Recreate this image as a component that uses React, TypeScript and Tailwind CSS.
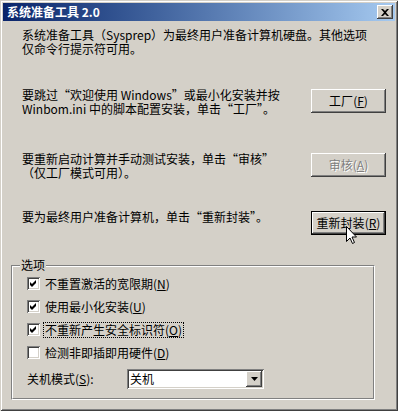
const raised =
  "shadow-[inset_-1px_-1px_#404040,inset_1px_1px_#ffffff,inset_-2px_-2px_#808080,inset_2px_2px_#d4d0c8]";

function Btn({ label, hot, disabled, isDefault }: { label: string; hot: string; disabled?: boolean; isDefault?: boolean }) {
  return (
    <div
      className={`w-[75px] h-[24px] shrink-0 flex items-center justify-center bg-[#d4d0c8] text-[12px] leading-[14px] ${
        isDefault
          ? "shadow-[inset_0_0_0_1px_#000000,inset_-2px_-2px_#404040,inset_2px_2px_#ffffff,inset_-3px_-3px_#808080]"
          : raised
      } ${disabled ? "text-[#808080] [text-shadow:1px_1px_0_#ffffff]" : "text-black"}`}
    >
      {label}(<span className="underline">{hot}</span>)
    </div>
  );
}

function Check({ checked }: { checked: boolean }) {
  return (
    <div className="w-[13px] h-[13px] shrink-0 bg-white shadow-[inset_1px_1px_#808080,inset_-1px_-1px_#ffffff,inset_2px_2px_#404040,inset_-2px_-2px_#d4d0c8]">
      {checked && (
        <svg width="13" height="13" viewBox="0 0 13 13">
          <polygon points="3,5 5,7 9,3 9,6 5,10 3,8" fill="#000" />
        </svg>
      )}
    </div>
  );
}

const options = [
  { text: "不重置激活的宽限期", hot: "N", checked: true },
  { text: "使用最小化安装", hot: "U", checked: true },
  { text: "不重新产生安全标识符", hot: "O", checked: true, focus: true },
  { text: "检测非即插即用硬件", hot: "D", checked: false },
];

export default function App() {
  return (
    <div className="relative w-[398px] h-[411px] overflow-hidden bg-[#d4d0c8] p-[3px] font-['Noto_Sans_CJK_SC',sans-serif] text-[12px] leading-[14px] text-black shadow-[inset_1px_1px_#d4d0c8,inset_-1px_-1px_#404040,inset_2px_2px_#ffffff,inset_-2px_-2px_#808080]">
      {/* Title bar */}
      <div className="h-[18px] flex items-center justify-between pl-[4px] pr-[2px] bg-linear-to-r from-[#0a246a] to-[#a6caf0]">
        <span className="text-white font-bold text-[12px]">系统准备工具 2.0</span>
        <div className={`w-[16px] h-[14px] flex items-center justify-center bg-[#d4d0c8] ${raised}`}>
          <svg width="8" height="7" viewBox="0 0 8 7">
            <path d="M0 0h2l2 2 2-2h2L5 3.5 8 7H6L4 5 2 7H0l3-3.5z" fill="#000" />
          </svg>
        </div>
      </div>

      <div className="-mx-[3px]">
        <p className="mt-[7px] pl-[22px]">
          系统准备工具（Sysprep）为最终用户准备计算机硬盘。其他选项
          <br />
          仅命令行提示符可用。
        </p>

        <div className="mt-[32px] pl-[22px] pr-[12px] flex justify-between items-start">
          <p>
            要跳过“欢迎使用 Windows”或最小化安装并按
            <br />
            Winbom.ini 中的脚本配置安装，单击“工厂”。
          </p>
          <div className="mt-[1px]">
            <Btn label="工厂" hot="F" />
          </div>
        </div>

        <div className="mt-[36px] pl-[22px] pr-[12px] flex justify-between items-start">
          <p>
            要重新启动计算并手动测试安装，单击“审核”
            <br />
            （仅工厂模式可用）。
          </p>
          <div className="mt-[1px]">
            <Btn label="审核" hot="A" disabled />
          </div>
        </div>

        <div className="mt-[30px] pl-[22px] pr-[12px] flex justify-between items-start">
          <p>要为最终用户准备计算机，单击“重新封装”。</p>
          <div className="mt-[1px]">
            <Btn label="重新封装" hot="R" isDefault />
          </div>
        </div>

        {/* Options group */}
        <div className="relative mt-[30px] ml-[11px] w-[364px] h-[135px] border border-t-[#808080] border-l-[#808080] border-b-white border-r-white">
          <div className="h-full border border-t-white border-l-white border-b-[#808080] border-r-[#808080] pl-[14px] pt-[10px] flex flex-col gap-[10px]">
            {options.map((o) => (
              <div key={o.text} className="flex items-center gap-[5px] h-[13px]">
                <Check checked={o.checked} />
                <span className={o.focus ? "px-[1px] -ml-[1px] outline-1 outline-dotted outline-black" : ""}>
                  {o.text}(<span className="underline">{o.hot}</span>)
                </span>
              </div>
            ))}
            <div className="flex items-center h-[20px]">
              <span className="w-[100px]">
                关机模式(<span className="underline">S</span>):
              </span>
              <div className="w-[137px] h-[20px] bg-white flex items-center justify-between p-[2px] shadow-[inset_1px_1px_#808080,inset_-1px_-1px_#ffffff,inset_2px_2px_#404040,inset_-2px_-2px_#d4d0c8]">
                <span className="pl-[1px]">关机</span>
                <div className={`w-[16px] h-[16px] flex items-center justify-center bg-[#d4d0c8] ${raised}`}>
                  <svg width="7" height="4" viewBox="0 0 7 4">
                    <path d="M0 0h7L3.5 4z" fill="#000" />
                  </svg>
                </div>
              </div>
            </div>
          </div>
          <span className="absolute left-[8px] -top-[8px] px-[1px] bg-[#d4d0c8]">选项</span>
        </div>
      </div>

      {/* Mouse cursor */}
      <svg className="absolute left-[346px] top-[226px]" width="12" height="19" viewBox="0 0 12 19">
        <path d="M0.5 0.5V15.5L4 12L6.5 17.5L8.5 16.5L6 11H10.5Z" fill="#fff" stroke="#000" strokeWidth="1" />
      </svg>
    </div>
  );
}
